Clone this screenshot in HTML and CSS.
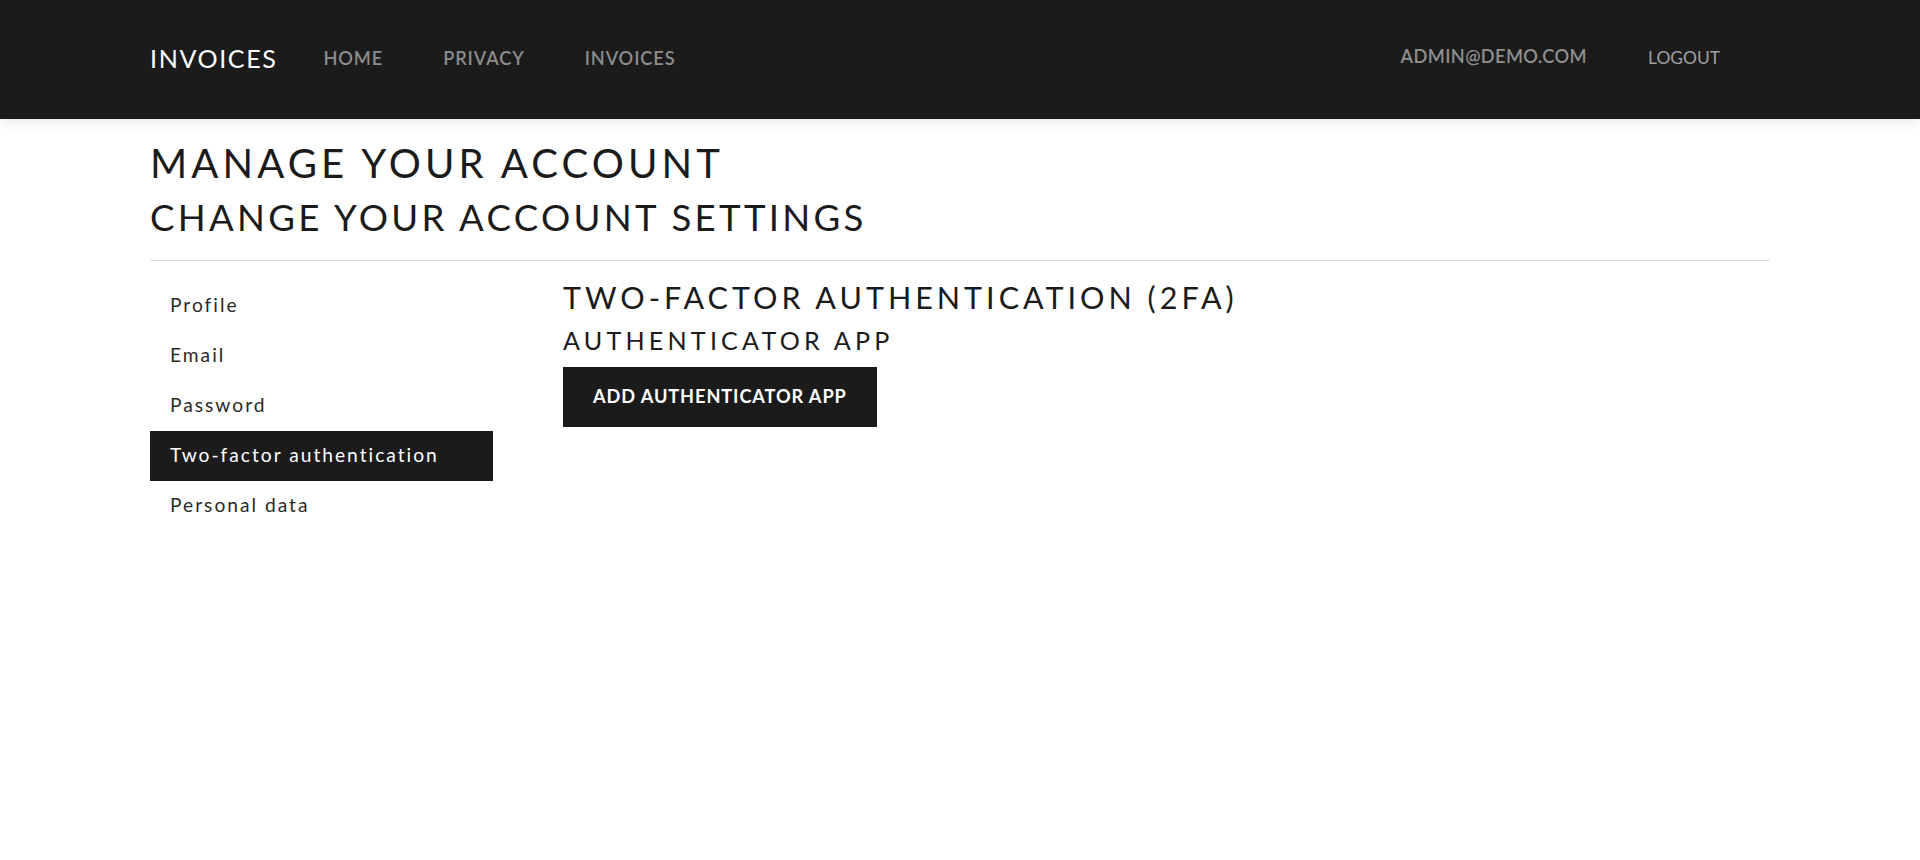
FILE: index.html
```html
<!DOCTYPE html>
<html lang="en">
<head>
<meta charset="utf-8">
<title>Manage your account</title>
<link rel="stylesheet" href="styles.css">
</head>
<body>
<header class="navbar">
  <div class="container nav-inner">
    <a class="brand" href="#">INVOICES</a>
    <ul class="nav-links">
      <li><a href="#">HOME</a></li>
      <li><a href="#">PRIVACY</a></li>
      <li><a href="#">INVOICES</a></li>
    </ul>
    <ul class="nav-right">
      <li><a href="#" class="user">ADMIN@DEMO.COM</a></li>
      <li><button class="logout" type="button">LOGOUT</button></li>
    </ul>
  </div>
</header>
<main class="container">
  <h1 class="page-title">MANAGE YOUR ACCOUNT</h1>
  <h2 class="page-subtitle">CHANGE YOUR ACCOUNT SETTINGS</h2>
  <hr class="divider">
  <div class="account-layout">
    <ul class="side-nav">
      <li><a href="#">Profile</a></li>
      <li><a href="#">Email</a></li>
      <li><a href="#">Password</a></li>
      <li><a href="#" class="active">Two-factor authentication</a></li>
      <li><a href="#">Personal data</a></li>
    </ul>
    <section class="content">
      <h3 class="section-title">TWO-FACTOR AUTHENTICATION (2FA)</h3>
      <h4 class="section-subtitle">AUTHENTICATOR APP</h4>
      <a href="#" class="btn-dark">ADD AUTHENTICATOR APP</a>
    </section>
  </div>
</main>
</body>
</html>
```
FILE: styles.css
```css
* { box-sizing: border-box; }
html, body { margin: 0; padding: 0; }
body {
  font-family: Lato, "Noto Sans", sans-serif;
  color: #1b1b1b;
  background: #fff;
}
a { text-decoration: none; color: inherit; }
ul { list-style: none; margin: 0; padding: 0; }

.container { width: 1620px; margin: 0 auto; }

/* ---------- top navbar ---------- */
.navbar {
  height: 119px;
  background: #1b1b1b;
  box-shadow: 0 4px 12px rgba(0, 0, 0, 0.08);
  position: relative;
}
.nav-inner { height: 100%; display: flex; align-items: center; padding-bottom: 4px; }
.brand {
  color: #fff;
  font-size: 25.1px;
  letter-spacing: 1.6px;
  margin-right: 16px;
}
.nav-links { display: flex; }
.nav-links a {
  display: block;
  padding: 0 30px;
  color: #8c8c8c;
  font-size: 18.2px;
  font-weight: 600;
  letter-spacing: 0.9px;
}
.nav-right { display: flex; align-items: center; margin-left: auto; margin-right: 50px; }
.user {
  display: block;
  padding-bottom: 3px;
  color: #8f8f8f;
  font-size: 18.2px;
  font-weight: 600;
  letter-spacing: 0.4px;
  margin-right: 61px;
}
.logout {
  background: none;
  border: 0;
  padding: 0;
  color: #a0a0a0;
  font-family: Lato, sans-serif;
  font-size: 17.4px;
  letter-spacing: 0;
}

/* ---------- page header ---------- */
.page-title {
  font-size: 40.1px;
  font-weight: 400;
  line-height: 1.2;
  letter-spacing: 4.1px;
  margin: 19.5px 0 0;
}
.page-subtitle {
  font-size: 36.6px;
  font-weight: 400;
  line-height: 1.2;
  letter-spacing: 3.3px;
  margin: 9px 0 0;
}
.divider { border: 0; border-top: 1px solid #d9d9d9; margin: 20.5px 0 20px; }

/* ---------- account layout ---------- */
.account-layout { display: grid; grid-template-columns: 343px 1fr; column-gap: 70px; }
.side-nav a {
  display: block;
  height: 50px;
  padding: 9px 20px 11px;
  line-height: 30px;
  font-size: 19.2px;
  color: #2a2a2a;
  letter-spacing: 2px;
}
.side-nav a.active { background: #1b1b1b; color: #fff; }

.section-title {
  font-size: 30.5px;
  font-weight: 400;
  line-height: 1.2;
  letter-spacing: 4px;
  margin: -2.5px 0 0;
}
.section-subtitle {
  font-size: 25.1px;
  font-weight: 400;
  line-height: 1.2;
  letter-spacing: 4.2px;
  margin: 10px 0 0;
}
.btn-dark {
  display: inline-block;
  margin-top: 12px;
  background: #1b1b1b;
  color: #fff;
  font-size: 18.2px;
  font-weight: 700;
  line-height: 28px;
  padding: 15px 30px 17px;
  letter-spacing: 0.9px;
}
```
